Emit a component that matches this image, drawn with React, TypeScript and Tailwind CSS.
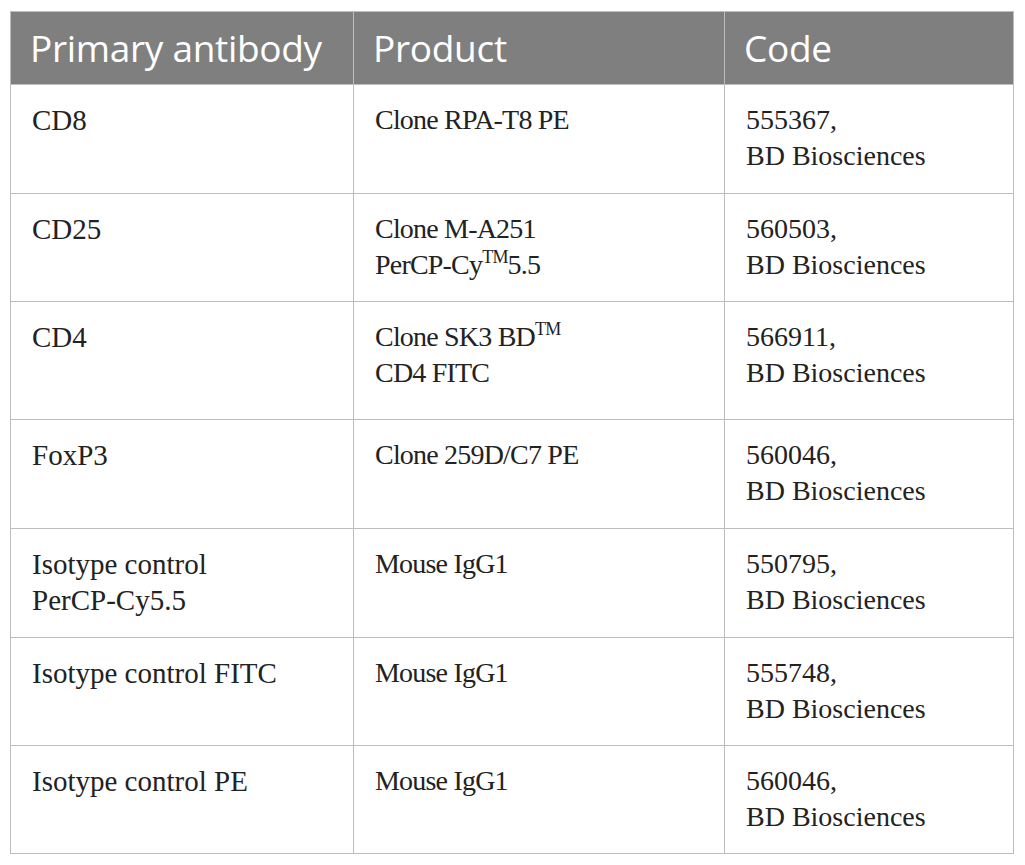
import React from "react";

type Row = { a: React.ReactNode; b: React.ReactNode; c: React.ReactNode; h: string };

const TM = () => <sup className="text-[18px] top-[-0.62em]">TM</sup>;

const rows: Row[] = [
  { a: "CD8", b: "Clone RPA-T8 PE", c: <>555367,<br />BD Biosciences</>, h: "h-[109px]" },
  { a: "CD25", b: <>Clone M-A251<br />PerCP-Cy<TM />5.5</>, c: <>560503,<br />BD Biosciences</>, h: "h-[108px]" },
  { a: "CD4", b: <>Clone SK3 BD<TM /><br />CD4 FITC</>, c: <>566911,<br />BD Biosciences</>, h: "h-[118px]" },
  { a: "FoxP3", b: "Clone 259D/C7 PE", c: <>560046,<br />BD Biosciences</>, h: "h-[109px]" },
  { a: <>Isotype control<br />PerCP-Cy5.5</>, b: "Mouse IgG1", c: <>550795,<br />BD Biosciences</>, h: "h-[109px]" },
  { a: "Isotype control FITC", b: "Mouse IgG1", c: <>555748,<br />BD Biosciences</>, h: "h-[108px]" },
  { a: "Isotype control PE", b: "Mouse IgG1", c: <>560046,<br />BD Biosciences</>, h: "h-[108px]" },
];

export default function App() {
  const serif = "font-['Liberation_Serif','Times_New_Roman',serif] text-[#222] leading-[36px]";
  return (
    <div className="w-[1025px] h-[865px] bg-white pt-[11px] pl-[10px]">
      <div className="grid grid-cols-[343px_371px_289px] border-t border-l border-[#bdbdbd] w-max">
        {["Primary antibody", "Product", "Code"].map((t) => (
          <div
            key={t}
            className="h-[73px] bg-[#7f7f7f] border-r border-b border-[#bdbdbd] flex items-center pl-[19px] text-white text-[37px] font-['Open_Sans',sans-serif] tracking-[-0.3px]"
          >
            {t}
          </div>
        ))}
        {rows.map((r, i) => (
          <React.Fragment key={i}>
            <div className={`${r.h} border-r border-b border-[#bdbdbd] pl-[21px] pt-[17px] ${serif} text-[29px]`}>{r.a}</div>
            <div className={`${r.h} border-r border-b border-[#bdbdbd] pl-[21px] pt-[17px] ${serif} text-[28px] tracking-[-0.8px]`}>{r.b}</div>
            <div className={`${r.h} border-r border-b border-[#bdbdbd] pl-[21px] pt-[17px] ${serif} text-[28px]`}>{r.c}</div>
          </React.Fragment>
        ))}
      </div>
    </div>
  );
}
